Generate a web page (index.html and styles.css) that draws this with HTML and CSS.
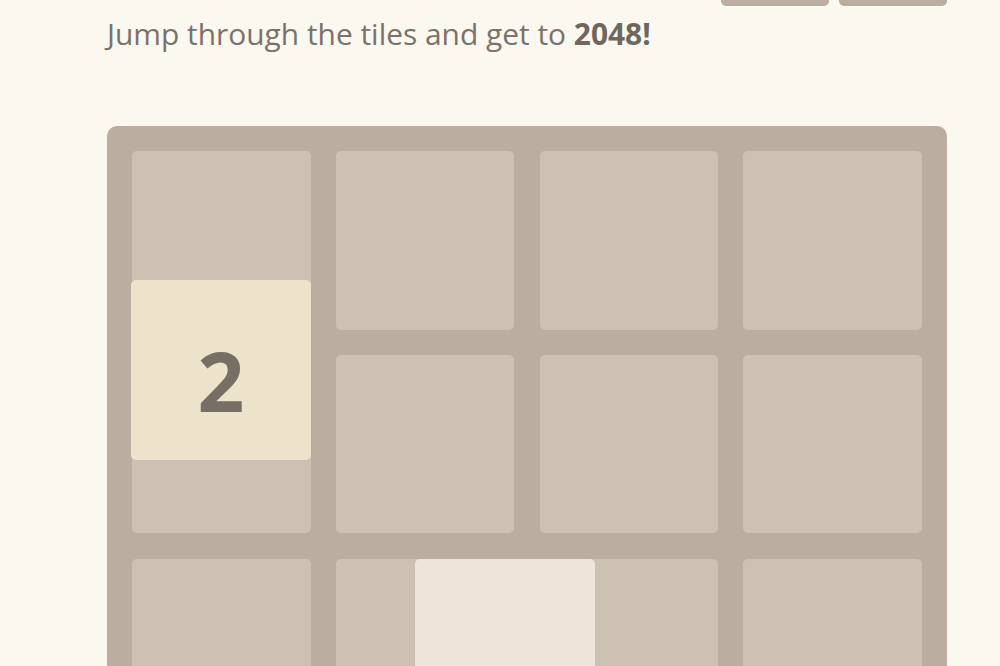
FILE: index.html
```html
<!DOCTYPE html>
<html lang="en">
<head>
<meta charset="utf-8">
<title>2048</title>
<link rel="stylesheet" href="styles.css">
</head>
<body>
<div class="container">
  <div class="top-bar">
    <a class="button" href="#" aria-label="New Game"></a>
    <a class="button" href="#" aria-label="Undo"></a>
  </div>
  <p class="game-intro">Jump through the tiles and get to <strong>2048!</strong></p>

  <div class="game-container">
    <div class="grid-container">
      <div class="grid-cell"></div><div class="grid-cell"></div><div class="grid-cell"></div><div class="grid-cell"></div>
      <div class="grid-cell"></div><div class="grid-cell"></div><div class="grid-cell"></div><div class="grid-cell"></div>
      <div class="grid-cell"></div><div class="grid-cell"></div><div class="grid-cell"></div><div class="grid-cell"></div>
      <div class="grid-cell"></div><div class="grid-cell"></div><div class="grid-cell"></div><div class="grid-cell"></div>
    </div>
    <div class="tile-container">
      <div class="tile tile-2 tile-moving-a">2</div>
      <div class="tile tile-blank tile-moving-b"></div>
    </div>
  </div>
</div>
</body>
</html>
```
FILE: styles.css
```css
html, body {
  margin: 0;
  padding: 0;
  background: #faf8ef;
  color: #776e65;
  font-family: "Open Sans", "Noto Sans", sans-serif;
  overflow: hidden;
}

.container {
  width: 840px;
  padding-left: 107px;
}

.top-bar {
  display: flex;
  justify-content: flex-end;
  gap: 10px;
  height: 6px;
}

.button {
  display: block;
  width: 108px;
  height: 40px;
  margin-top: -34px;
  background: #bbada0;
  border-radius: 5px;
  text-decoration: none;
}

.game-intro {
  margin: 11px 0 0;
  font-size: 29.9px;
  line-height: 34px;
  color: #7a726b;
}

.game-intro strong {
  font-weight: 700;
  color: #6f6660;
}

.game-container {
  position: relative;
  margin-top: 75px;
  width: 840px;
  border-radius: 10px;
  background: #bbada0;
}

.grid-container {
  display: grid;
  grid-template-columns: repeat(4, 178.5px);
  grid-auto-rows: 178.5px;
  gap: 25.2px;
  padding: 25.2px;
}

.grid-cell {
  background: #cdc1b4;
  border-radius: 5px;
}

/* tiles float above the grid while they slide */
.tile-container {
  position: absolute;
  inset: 0;
}

.tile {
  position: absolute;
  box-sizing: border-box;
  width: 180px;
  height: 180px;
  padding-top: 20px;
  border-radius: 5px;
  display: flex;
  align-items: center;
  justify-content: center;
  font-family: "Open Sans", "Noto Sans", sans-serif;
  font-weight: 700;
  font-size: 82px;
  line-height: 1;
  color: #776e65;
}

.tile-2 {
  background: #ede2ca;
}

.tile-blank {
  background: #eee4da;
}

.tile-moving-a {
  left: 24px;
  top: 154px;
}

.tile-moving-b {
  left: 308px;
  top: 433px;
}
```
